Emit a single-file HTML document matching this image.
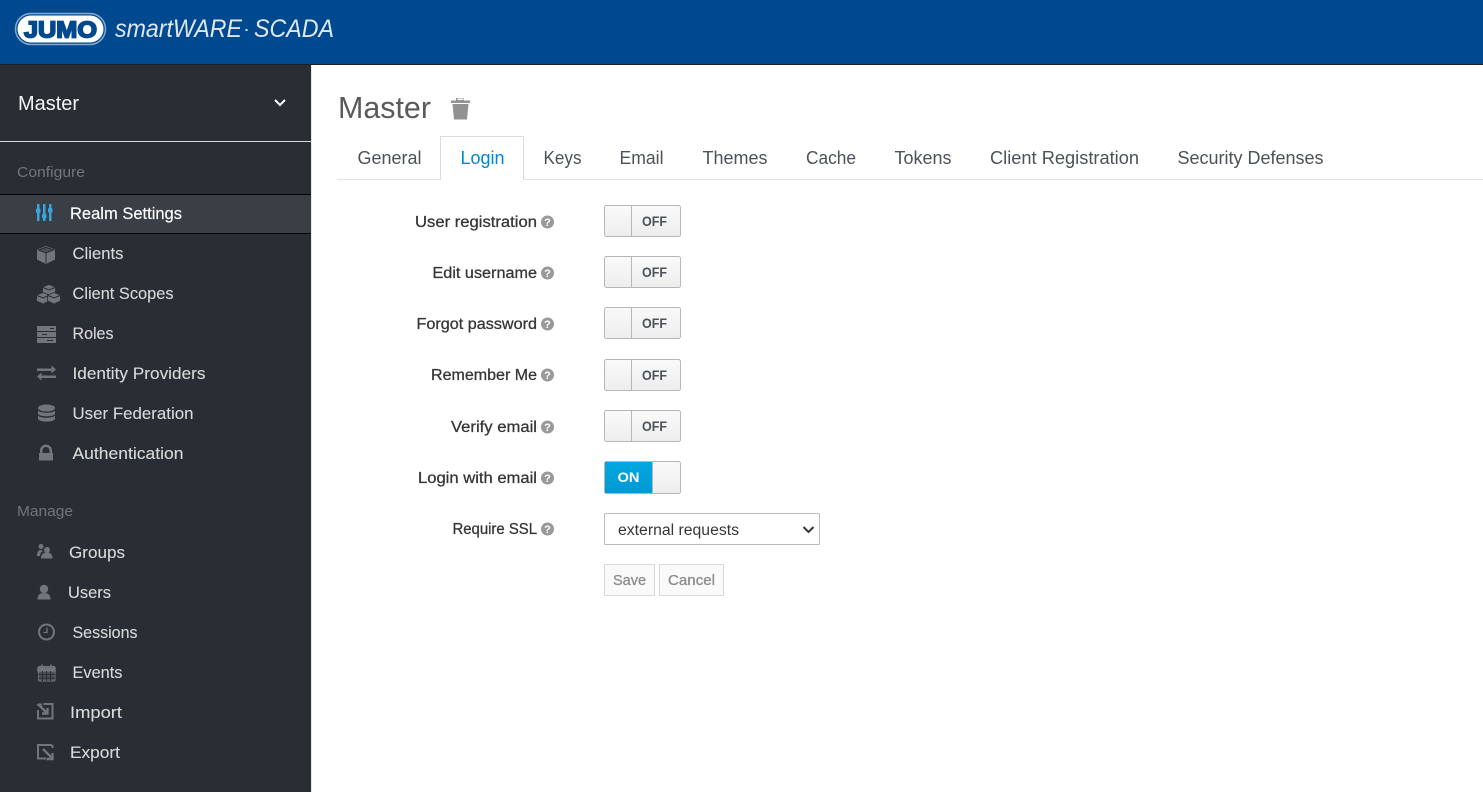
<!DOCTYPE html>
<html><head><meta charset="utf-8"><title>Master</title>
<style>
html,body{margin:0;padding:0;width:1483px;height:792px;overflow:hidden;background:#fff}
svg{display:block;font-family:"Liberation Sans",sans-serif}
.n{font-size:17px;fill:#d8d8d8;stroke:#d8d8d8;stroke-width:.12}
.h{font-size:15px;fill:#72767b}
.t{font-size:18.5px;fill:#4d5258}
.l{font-size:15.5px;fill:#363636;stroke:#363636;stroke-width:.28}
.o{font-size:13.5px;font-weight:bold;fill:#4d5258}
.i{fill:#72767b}
</style></head><body>
<svg width="1483" height="792" viewBox="0 0 1483 792" xmlns="http://www.w3.org/2000/svg">
<defs>
<linearGradient id="g" x1="0" y1="0" x2="0" y2="1"><stop offset="0" stop-color="#fafafa"/><stop offset="1" stop-color="#ededed"/></linearGradient>
<linearGradient id="b" x1="0" y1="0" x2="0" y2="1"><stop offset="0" stop-color="#00a8e1"/><stop offset="1" stop-color="#0099d3"/></linearGradient>
<g id="q"><circle cx="0" cy="0" r="6.5" fill="#999"/><text x="0" y="4" text-anchor="middle" font-size="11" font-weight="bold" fill="#fff">?</text></g>
<g id="off"><rect x=".5" y=".5" width="76" height="31" rx="2" fill="url(#g)" stroke="#b7b7b7"/><path d="M27.500 1v30" stroke="#b7b7b7" fill="none"/><text class="o" x="38" y="21" textLength="25" lengthAdjust="spacingAndGlyphs">OFF</text></g>
</defs>

<rect width="1483" height="64" fill="#00498e"/>
<rect y="64" width="1483" height="1" fill="#1d2126"/>
<rect x="15.500" y="13.500" width="90" height="31" rx="15.500" fill="none" stroke="#8aa8cb" stroke-width="1.500"/>
<rect x="17.500" y="15.500" width="86" height="27" rx="13.500" fill="#fff"/>
<text x="24" y="37.500" font-size="23.500" font-weight="bold" fill="#00498e" stroke="#00498e" stroke-width="1.700" textLength="73" lengthAdjust="spacingAndGlyphs">JUMO</text>
<text x="115" y="37" font-size="25" font-style="italic" fill="#dfe7f1" textLength="127" lengthAdjust="spacingAndGlyphs">smartWARE</text>
<rect x="245.500" y="29" width="2" height="2" fill="#dfe7f1"/>
<text x="254" y="37" font-size="25" font-style="italic" fill="#dfe7f1" textLength="80" lengthAdjust="spacingAndGlyphs">SCADA</text>

<rect y="65" width="311" height="727" fill="#292e34"/>
<rect x="311" y="65" width="1" height="727" fill="#e7e7e7"/>
<text x="18" y="110" font-size="20.500" fill="#f4f4f4" textLength="61" lengthAdjust="spacingAndGlyphs">Master</text>
<path d="M275 100l5 5 5-5" fill="none" stroke="#fff" stroke-width="2"/>
<rect y="141" width="311" height="1" fill="#d8d8d8"/>
<text class="h" x="17" y="177" textLength="68" lengthAdjust="spacingAndGlyphs">Configure</text>
<rect y="194" width="311" height="40" fill="#393f44"/>
<rect y="194" width="311" height="1" fill="#050505"/>
<rect y="233" width="311" height="1" fill="#050505"/>

<g fill="#39a5dc">
<rect x="37" y="204" width="2.500" height="17"/><rect x="43" y="204" width="2.500" height="17"/><rect x="49" y="204" width="2.500" height="17"/>
<rect x="36" y="208.500" width="4.500" height="4.500" rx="1"/><rect x="42" y="214" width="4.500" height="4.500" rx="1"/><rect x="48" y="208" width="4.500" height="4.500" rx="1"/>
</g>
<text x="70" y="219" font-size="17" fill="#fff" stroke="#fff" stroke-width=".15" textLength="112" lengthAdjust="spacingAndGlyphs">Realm Settings</text>

<path class="i" d="M46 246l9 3.500v10l-9 4.500-9-4.500v-10z"/><path fill="#4b4f55" stroke="#292e34" d="M38.500 250l7.500-2.700 7.500 2.700-7.500 3z"/><path d="M46 253.500v10" stroke="#292e34" fill="none"/>
<text class="n" x="72.500" y="259" textLength="51" lengthAdjust="spacingAndGlyphs">Clients</text>

<g class="i" stroke="#292e34" stroke-width=".8"><path d="M49 284.500l6.500 2.500v6l-6.500 3-6.500-3v-6z"/><path d="M43 292.500l6.500 2.500v6l-6.500 3-6.500-3v-6z"/><path d="M54 292.500l6.500 2.500v6l-6.500 3-6.500-3v-6z"/></g>
<path d="M43 287.500l6 2.500 6-2.500M37 295.500l6 2.500 6-2.500M48 295.500l6 2.500 6-2.500" stroke="#292e34" fill="none"/>
<text class="n" x="72.500" y="299" textLength="101" lengthAdjust="spacingAndGlyphs">Client Scopes</text>

<g class="i"><rect x="37" y="326" width="19" height="5"/><rect x="37" y="332" width="19" height="5"/><rect x="37" y="338" width="19" height="5"/></g>
<path d="M50 328.500h4M42 334.500h5M47 340.500h6" stroke="#292e34" stroke-width="1"/>
<text class="n" x="72.500" y="339" textLength="41" lengthAdjust="spacingAndGlyphs">Roles</text>

<path class="i" d="M37 368.500h14.500v-3l4.500 4-4.500 4v-2.500h-14.500zM56 375.500h-14.500v-3l-4.500 4 4.500 4v-2.500h14.500z"/>
<text class="n" x="72.500" y="379" textLength="133" lengthAdjust="spacingAndGlyphs">Identity Providers</text>

<g class="i"><ellipse cx="46.500" cy="408" rx="8.500" ry="3.500"/><path d="M38 410.500c2 3 15 3 17 0v3.500c-2 3-15 3-17 0zM38 415.500c2 3 15 3 17 0v3.500c-2 3.500-15 3.500-17 0z"/></g>
<text class="n" x="72.500" y="419" textLength="121" lengthAdjust="spacingAndGlyphs">User Federation</text>

<path class="i" d="M40 453v-2.500a6 6 0 0 1 12 0v2.500h1v7.500h-14v-7.500zM42.500 453h7v-2.500a3.500 3.500 0 0 0-7 0z" fill-rule="evenodd"/>
<text class="n" x="72.500" y="459" textLength="111" lengthAdjust="spacingAndGlyphs">Authentication</text>

<text class="h" x="17" y="516" textLength="56" lengthAdjust="spacingAndGlyphs">Manage</text>

<g class="i"><circle cx="41" cy="546.500" r="2.500"/><path d="M37 556c0-4 1-6 4-6l2 1c-2 1-3 3-3 5z"/><circle cx="47" cy="550" r="3"/><path d="M41 558.500c0-4 2-6 6-6s5.500 2 5.500 6z"/></g>
<text class="n" x="69" y="558" textLength="56" lengthAdjust="spacingAndGlyphs">Groups</text>

<g class="i"><circle cx="44" cy="589" r="4.200"/><path d="M37.500 599.500c0-4.500 2-6.500 6.500-6.500s6.500 2 6.500 6.500z"/></g>
<text class="n" x="68" y="598" textLength="43" lengthAdjust="spacingAndGlyphs">Users</text>

<circle cx="46.500" cy="632" r="7.500" fill="none" stroke="#72767b" stroke-width="2"/><path d="M47 627.500v5h-3.500" fill="none" stroke="#72767b" stroke-width="1.300"/>
<text class="n" x="72.500" y="638" textLength="65" lengthAdjust="spacingAndGlyphs">Sessions</text>

<rect x="38.500" y="666.500" width="16.500" height="14.500" rx="1" fill="#4d5157" stroke="#72767b"/>
<path d="M38 668h17v3h-17zM42 664.500v4M51 664.500v4" stroke="#72767b" stroke-width="1.500" fill="#72767b"/>
<path d="M42.500 671v10M46.500 671v10M50.500 671v10M38.500 674.500h16.500M38.500 678h16.500" stroke="#292e34" fill="none"/>
<text class="n" x="72.500" y="678" textLength="50" lengthAdjust="spacingAndGlyphs">Events</text>

<path d="M42 704.500h-4v-.5M38 710v8.500h14.500v-14.500h-9" fill="none" stroke="#72767b" stroke-width="2"/><path d="M38 704l9 9M47.500 708v5.500h-5.500" fill="none" stroke="#72767b" stroke-width="2.400"/>
<text class="n" x="70" y="718" textLength="52" lengthAdjust="spacingAndGlyphs">Import</text>

<path d="M52 745h-14v13.500h8M52.500 745v3" fill="none" stroke="#72767b" stroke-width="2"/><path d="M43 749l9 9M52.500 753v6h-6" fill="none" stroke="#72767b" stroke-width="2.400"/>
<text class="n" x="70" y="758" textLength="50" lengthAdjust="spacingAndGlyphs">Export</text>

<text x="338" y="118" font-size="31" fill="#5a5a5a" textLength="93" lengthAdjust="spacingAndGlyphs">Master</text>
<path fill="#929292" d="M451 100.500h5v-2.500h8v2.500h6v2.500h-19zM452.500 104h16l-1.500 15.500h-13z"/>
<path d="M457.500 98.500v1.500h6v-1.500z" fill="#fff"/>

<path d="M337 179.500h103.500M523.500 179.500H1483" stroke="#e5e5e5"/>
<path d="M440.500 180v-43.500h83v43.500" fill="#fff" stroke="#dcdcdc"/>
<text class="t" x="357.500" y="164" textLength="64" lengthAdjust="spacingAndGlyphs">General</text>
<text x="460.500" y="164" font-size="18.500" fill="#0088ce" textLength="44" lengthAdjust="spacingAndGlyphs">Login</text>
<text class="t" x="543.500" y="164" textLength="38" lengthAdjust="spacingAndGlyphs">Keys</text>
<text class="t" x="619.500" y="164" textLength="44" lengthAdjust="spacingAndGlyphs">Email</text>
<text class="t" x="702.500" y="164" textLength="65" lengthAdjust="spacingAndGlyphs">Themes</text>
<text class="t" x="806" y="164" textLength="50" lengthAdjust="spacingAndGlyphs">Cache</text>
<text class="t" x="894.500" y="164" textLength="57" lengthAdjust="spacingAndGlyphs">Tokens</text>
<text class="t" x="990" y="164" textLength="149" lengthAdjust="spacingAndGlyphs">Client Registration</text>
<text class="t" x="1177.500" y="164" textLength="146" lengthAdjust="spacingAndGlyphs">Security Defenses</text>

<text class="l" x="415" y="227" textLength="122" lengthAdjust="spacingAndGlyphs">User registration</text><use href="#q" x="547.500" y="222"/>
<text class="l" x="432.500" y="278" textLength="104.500" lengthAdjust="spacingAndGlyphs">Edit username</text><use href="#q" x="547.500" y="273"/>
<text class="l" x="416.500" y="329" textLength="120.500" lengthAdjust="spacingAndGlyphs">Forgot password</text><use href="#q" x="547.500" y="324"/>
<text class="l" x="431" y="380" textLength="106" lengthAdjust="spacingAndGlyphs">Remember Me</text><use href="#q" x="547.500" y="375"/>
<text class="l" x="451" y="432" textLength="86" lengthAdjust="spacingAndGlyphs">Verify email</text><use href="#q" x="547.500" y="427"/>
<text class="l" x="418" y="483" textLength="119" lengthAdjust="spacingAndGlyphs">Login with email</text><use href="#q" x="547.500" y="478"/>
<text class="l" x="452.500" y="534" textLength="84.500" lengthAdjust="spacingAndGlyphs">Require SSL</text><use href="#q" x="547.500" y="529"/>

<use href="#off" x="604" y="205"/>
<use href="#off" x="604" y="256"/>
<use href="#off" x="604" y="307"/>
<use href="#off" x="604" y="359"/>
<use href="#off" x="604" y="410"/>

<rect x="604.500" y="461.500" width="76" height="32" rx="2" fill="url(#g)" stroke="#b7b7b7"/>
<rect x="605" y="462" width="47.500" height="31" fill="url(#b)"/>
<path d="M652.500 462v31" stroke="#b7b7b7"/>
<text x="617.500" y="482" font-size="14" font-weight="bold" fill="#fff" textLength="22" lengthAdjust="spacingAndGlyphs">ON</text>

<rect x="604.500" y="513.500" width="215" height="31" rx="1" fill="#fff" stroke="#bbb"/>
<text x="618" y="535" font-size="15.500" fill="#363636" textLength="121" lengthAdjust="spacingAndGlyphs">external requests</text>
<path d="M803.500 527l5 5 5-5" fill="none" stroke="#363636" stroke-width="2"/>

<rect x="604.500" y="564.500" width="50" height="31" fill="#fafafa" stroke="#d9d9d9"/>
<text x="613" y="585" font-size="15" fill="#8f8f8f" stroke="#8f8f8f" stroke-width=".35" textLength="33" lengthAdjust="spacingAndGlyphs">Save</text>
<rect x="659.500" y="564.500" width="64" height="31" fill="#fafafa" stroke="#d9d9d9"/>
<text x="668" y="585" font-size="15" fill="#8f8f8f" stroke="#8f8f8f" stroke-width=".35" textLength="47" lengthAdjust="spacingAndGlyphs">Cancel</text>
</svg>
</body></html>
